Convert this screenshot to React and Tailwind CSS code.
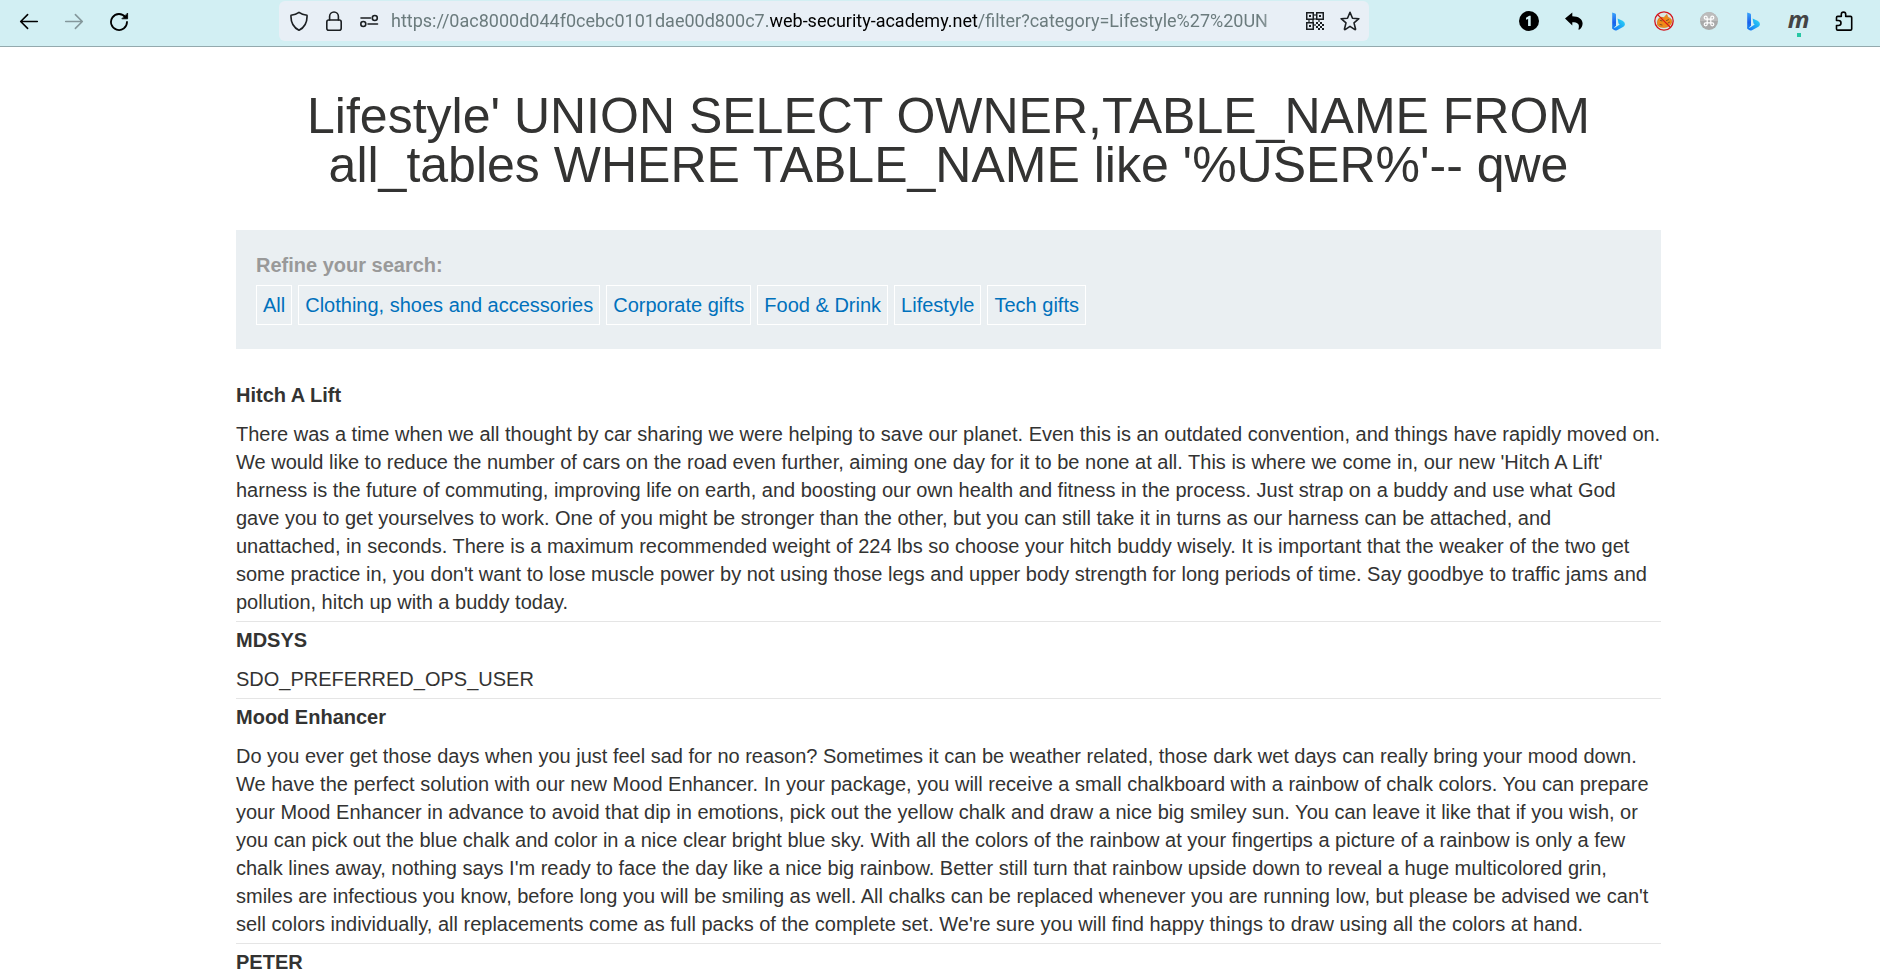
import React from "react";

const categories = [
  "All",
  "Clothing, shoes and accessories",
  "Corporate gifts",
  "Food & Drink",
  "Lifestyle",
  "Tech gifts",
];

const products = [
  {
    title: "Hitch A Lift",
    text: "There was a time when we all thought by car sharing we were helping to save our planet. Even this is an outdated convention, and things have rapidly moved on. We would like to reduce the number of cars on the road even further, aiming one day for it to be none at all. This is where we come in, our new 'Hitch A Lift' harness is the future of commuting, improving life on earth, and boosting our own health and fitness in the process. Just strap on a buddy and use what God gave you to get yourselves to work. One of you might be stronger than the other, but you can still take it in turns as our harness can be attached, and unattached, in seconds. There is a maximum recommended weight of 224 lbs so choose your hitch buddy wisely. It is important that the weaker of the two get some practice in, you don't want to lose muscle power by not using those legs and upper body strength for long periods of time. Say goodbye to traffic jams and pollution, hitch up with a buddy today.",
  },
  { title: "MDSYS", text: "SDO_PREFERRED_OPS_USER" },
  {
    title: "Mood Enhancer",
    text: "Do you ever get those days when you just feel sad for no reason? Sometimes it can be weather related, those dark wet days can really bring your mood down. We have the perfect solution with our new Mood Enhancer. In your package, you will receive a small chalkboard with a rainbow of chalk colors. You can prepare your Mood Enhancer in advance to avoid that dip in emotions, pick out the yellow chalk and draw a nice big smiley sun. You can leave it like that if you wish, or you can pick out the blue chalk and color in a nice clear bright blue sky. With all the colors of the rainbow at your fingertips a picture of a rainbow is only a few chalk lines away, nothing says I'm ready to face the day like a nice big rainbow. Better still turn that rainbow upside down to reveal a huge multicolored grin, smiles are infectious you know, before long you will be smiling as well. All chalks can be replaced whenever you are running low, but please be advised we can't sell colors individually, all replacements come as full packs of the complete set. We're sure you will find happy things to draw using all the colors at hand.",
  },
  { title: "PETER", text: "" },
];

function Icon({ children, size = 20, ...rest }) {
  return (
    <svg
      width={size}
      height={size}
      viewBox="0 0 20 20"
      fill="none"
      stroke="currentColor"
      strokeWidth="1.6"
      strokeLinecap="round"
      strokeLinejoin="round"
      aria-hidden="true"
      {...rest}
    >
      {children}
    </svg>
  );
}

const BackIcon = () => (
  <Icon>
    <path d="M18.3 10.5H1.8M8.6 3.6L1.7 10.5l6.9 6.9" />
  </Icon>
);

const ForwardIcon = () => (
  <Icon>
    <path d="M1.7 10.5h16.5M11.4 3.6l6.9 6.9-6.9 6.9" />
  </Icon>
);

const ReloadIcon = () => (
  <Icon>
    <path d="M16.4 6.2A8 8 0 1 0 18 11" strokeWidth="1.8" />
    <path d="M18.6 2.4v5.4h-5.4z" fill="currentColor" strokeWidth="0.8" />
  </Icon>
);

const ShieldIcon = () => (
  <Icon>
    <path d="M10 1.3c2.2 1.7 5 2.6 8 2.9.3 5-1 11.5-8 15.1C3 15.700 1.700 9.200 2 4.200c3-.3 5.800-1.200 8-2.900z" />
  </Icon>
);

const LockIcon = () => (
  <Icon>
    <rect x="2.800" y="9" width="14.400" height="10.200" rx="2" />
    <path d="M5.600 9V5.400a4.400 4.400 0 0 1 8.800 0V9" />
  </Icon>
);

const PermissionsIcon = () => (
  <Icon>
    <path d="M2 7h9.500M9 13h9.500" />
    <circle cx="15.800" cy="7" r="2.500" />
    <circle cx="4.300" cy="13" r="2.500" />
  </Icon>
);

const QrIcon = () => (
  <Icon stroke="none" fill="currentColor">
    <path
      fillRule="evenodd"
      d="M1 1h8v8H1zM2.500 2.500v5h5v-5zM11 1h8v8h-8zM12.500 2.500v5h5v-5zM1 11h8v8H1zM2.500 12.500v5h5v-5z"
    />
    <path d="M4 4h2v2H4zM14 4h2v2h-2zM4 14h2v2H4zM11 11h2v2h-2zM15 11h2v2h-2zM13 13h2v2h-2zM17 13h2v2h-2zM11 15h2v2h-2zM15 15h2v2h-2zM13 17h2v2h-2zM17 17h2v2h-2z" />
    <path d="M9 3h2v2H9zM9 7h2v2H9zM3 9h2v2H3zM7 9h2v2H7zM13 9h2v2h-2zM9 13h2v2H9z" opacity="0.6" />
  </Icon>
);

const StarIcon = () => (
  <Icon>
    <path d="M10 1.300l2.500 5.900 6.400.5-4.900 4.200 1.600 6.300q-.1.600-.7.400L10 15.400l-4.900 3.200q-.6.200-.7-.4L6 11.900 1.100 7.700l6.400-.5z" />
  </Icon>
);

const BadgeOneIcon = () => (
  <Icon stroke="none">
    <circle cx="10" cy="10" r="10" fill="#000" />
    <path d="M7 6.800L10.200 4.800h1.500V15H9.100V7.900l-2.100.9z" fill="#d2eff3" />
  </Icon>
);

const ReplyIcon = () => (
  <Icon stroke="none" fill="#000">
    <path d="M1 7.600L8.300 1.500v3.700c6 .1 10.300 2.600 10.300 7.300 0 2.400-1.300 4.700-3.200 6.100-.6.400-1.100.2-.9-.5 1.600-5.300-1.200-6.700-6.200-6.800v3.200z" />
  </Icon>
);

const BingIcon = ({ id }) => (
  <Icon stroke="none">
    <defs>
      <linearGradient id={id + "-stem"} x1="0" y1="0" x2="0" y2="1">
        <stop offset="0" stopColor="#3aa5fb" />
        <stop offset="0.6" stopColor="#1b61ec" />
        <stop offset="1" stopColor="#158cf0" />
      </linearGradient>
      <linearGradient id={id + "-bowl"} x1="0" y1="1" x2="1" y2="0">
        <stop offset="0" stopColor="#166df5" />
        <stop offset="0.6" stopColor="#1fb2f5" />
        <stop offset="1" stopColor="#35dcf6" />
      </linearGradient>
    </defs>
    <path d="M3.200 1.500l3 1.100q.8.300.8 1.200v10.800L3.900 18q-.7-.6-.7-1.700z" fill={"url(#" + id + "-stem)"} />
    <path d="M8.600 7.500l5 2.200q2.500 1.200 2.300 3.700-.2 1.500-1.500 2.300L8 19.200q-2.300 1.100-4.300-1.100-.5-.7-.5-1.800 1.600 1.200 3.800-.4l3.700-2.500-1.200-.9z" fill={"url(#" + id + "-bowl)"} />
  </Icon>
);

const BlockedOrangeIcon = () => (
  <Icon>
    <circle cx="10" cy="10" r="8.500" fill="#dbe7e2" stroke="none" />
    <path d="M4.500 8q2-3 5.300-1.300l3-3.300 1.200 3q4.200 1.200 3.800 4.600-1 4.800-7.300 5.500-5 .2-6.800-2.200-1.200-3.800.8-6.300z" fill="#f08a18" stroke="#c97412" strokeWidth="0.600" />
    <path d="M6 13.500l2 .5M12.500 9.500l2-.8M6.500 9.500l1.500.4M14 12l1.500-.8" stroke="#6e4524" strokeWidth="0.900" />
    <circle cx="10" cy="10" r="9.200" stroke="#d3141c" strokeWidth="1.300" />
    <path d="M3.600 3.600l12.800 12.800" stroke="#d3141c" strokeWidth="1.300" />
  </Icon>
);

const CommandIcon = () => (
  <Icon>
    <circle cx="10" cy="10" r="9" fill="#a9a9a9" stroke="none" />
    <path d="M1 10a9 9 0 0 1 18 0z" fill="#bcbcbc" stroke="none" />
    <path
      d="M8.200 8.200h3.600v3.600H8.200zM8.200 8.200H6.700a1.500 1.500 0 1 1 1.500-1.500zM11.800 8.200V6.700a1.500 1.500 0 1 1 1.500 1.500zM11.800 11.800h1.500a1.500 1.500 0 1 1-1.500 1.500zM8.200 11.800v1.500a1.500 1.500 0 1 1-1.500-1.500z"
      stroke="#fff"
      strokeWidth="1.200"
    />
  </Icon>
);

const PuzzleIcon = () => (
  <Icon>
    <path d="M2.500 9.500V6.600q0-1.200 1.200-1.200h3.600V3.300a2.200 2.200 0 0 1 4.400 0v2.100h4.800q1.200 0 1.200 1.200v11.300q0 1.200-1.200 1.200H3.700q-1.200 0-1.200-1.200v-3.400h2a2.400 2.400 0 0 0 0-5z" />
  </Icon>
);

function ToolButton({ label, children, disabled }) {
  return (
    <button
      type="button"
      aria-label={label}
      disabled={disabled}
      className="flex h-10 w-[45px] shrink-0 items-center justify-center text-black disabled:text-[#84979b]"
    >
      {children}
    </button>
  );
}

function BarButton({ label, children }) {
  return (
    <button
      type="button"
      aria-label={label}
      className="flex h-10 w-[35px] shrink-0 items-center justify-center text-[#1b1f22]"
    >
      {children}
    </button>
  );
}

function Toolbar() {
  return (
    <header className="flex h-[47px] shrink-0 items-start border-b border-[#93a9ad] bg-[#d2eff3] pt-px pr-3.5 pl-1.5">
      <nav aria-label="History" className="flex w-[273px] shrink-0">
        <ToolButton label="Back"><BackIcon /></ToolButton>
        <ToolButton label="Forward" disabled><ForwardIcon /></ToolButton>
        <ToolButton label="Reload"><ReloadIcon /></ToolButton>
      </nav>
      <div className="flex h-10 w-[1090px] min-w-0 items-center rounded-md bg-[#e8eff6] px-[2px]">
        <BarButton label="Tracking protection"><ShieldIcon /></BarButton>
        <BarButton label="Connection security"><LockIcon /></BarButton>
        <BarButton label="Site permissions"><PermissionsIcon /></BarButton>
        <div
          role="textbox"
          aria-label="Address"
          contentEditable
          suppressContentEditableWarning
          className="ml-[5px] min-w-0 flex-1 overflow-hidden font-[Roboto,sans-serif] text-[18px] leading-10 whitespace-nowrap text-[#6b7b7d] outline-none [mask-image:linear-gradient(to_left,transparent,black_40px)]"
        >
          https://0ac8000d044f0cebc0101dae00d800c7.
          <span className="text-black">web-security-academy.net</span>
          /filter?category=Lifestyle%27%20UN
        </div>
        <BarButton label="QR code"><QrIcon /></BarButton>
        <BarButton label="Bookmark"><StarIcon /></BarButton>
      </div>
      <nav aria-label="Extensions" className="flex flex-1 justify-end">
        <ToolButton label="Counter"><BadgeOneIcon /></ToolButton>
        <ToolButton label="Undo"><ReplyIcon /></ToolButton>
        <ToolButton label="Bing"><BingIcon id="bing-a" /></ToolButton>
        <ToolButton label="Blocker"><BlockedOrangeIcon /></ToolButton>
        <ToolButton label="Shortcuts"><CommandIcon /></ToolButton>
        <ToolButton label="Bing chat"><BingIcon id="bing-b" /></ToolButton>
        <button
          type="button"
          className="relative flex h-10 w-[45px] shrink-0 items-center justify-center pb-1 font-['Open_Sans',sans-serif] text-[24px] leading-none font-bold text-[#444] italic"
        >
          m
          <span className="absolute bottom-1 left-1/2 size-1 -translate-x-1/2 bg-[#27c7a4]" />
        </button>
        <ToolButton label="Manage extensions"><PuzzleIcon /></ToolButton>
      </nav>
    </header>
  );
}

export default function App() {
  return (
    <div className="flex h-screen flex-col bg-white font-['Liberation_Sans',Arial,sans-serif] text-[20px] leading-7 text-[#333332]">
      <Toolbar />
      <main className="flex-1 overflow-y-auto pl-[17px] [scrollbar-width:none]">
        <div className="mx-auto w-full max-w-[1425px]">
          <h1 className="px-5 pt-[45px] text-center text-[50px] leading-[49px]">
            Lifestyle' UNION SELECT OWNER,TABLE_NAME FROM all_tables WHERE TABLE_NAME like '%USER%'-- qwe
          </h1>
          <section className="mt-10 bg-[#eaeff2] px-5 pt-[21px] pb-6">
            <h2 className="font-bold text-[#999]">Refine your search:</h2>
            <nav aria-label="Categories" className="mt-[6px] flex flex-wrap gap-[6px]">
              {categories.map((name) => (
                <a key={name} href="#" className="border border-white px-[6px] py-[5px] text-[#0071bc]">
                  {name}
                </a>
              ))}
            </nav>
          </section>
          <section className="mt-7">
            {products.map((item) => (
              <article key={item.title} className="border-b border-[#e5e5e5] pt-1 pb-[5px]">
                <h3 className="font-bold">{item.title}</h3>
                <p className="mt-[11px]">{item.text}</p>
              </article>
            ))}
          </section>
        </div>
      </main>
    </div>
  );
}
